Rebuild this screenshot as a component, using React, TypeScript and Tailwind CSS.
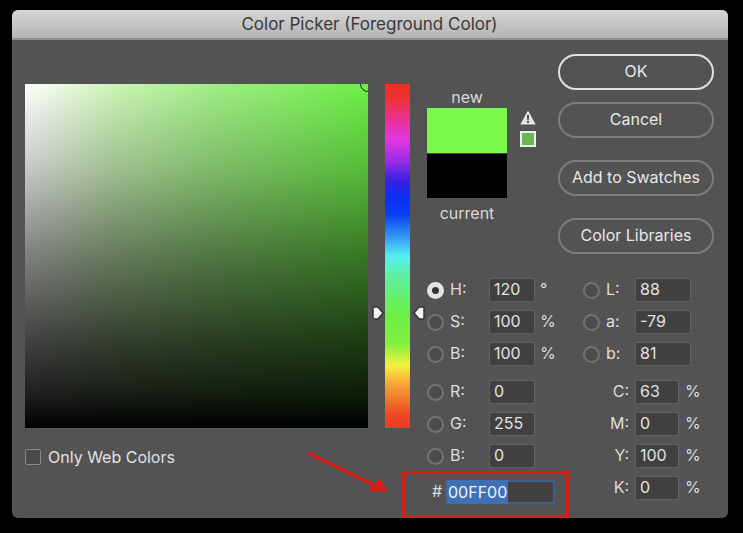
import React from "react";

const FONT = "[font-family:Inter,'Liberation_Sans',Arial,sans-serif]";

interface FieldRowProps {
  label: string;
  value: string;
  unit?: string;
  selected?: boolean;
}

const Radio = ({ selected }: { selected?: boolean }) =>
  selected ? (
    <span className="flex h-[17px] w-[17px] shrink-0 items-center justify-center rounded-full bg-[#e4e4e4]">
      <span className="h-[7px] w-[7px] rounded-full bg-[#333333]" />
    </span>
  ) : (
    <span className="h-[17px] w-[17px] shrink-0 rounded-full border-2 border-[#737373] bg-[#4c4c4c]" />
  );

const NumberBox = ({ value, width }: { value: string; width: string }) => (
  <span
    className={`flex h-[24px] items-center border border-[#606060] bg-[#404040] pb-[2px] pl-[4px] text-[16px] text-[#e2e2e2] ${width}`}
  >
    {value}
  </span>
);

// H S B and R G B rows
const HsbRow = ({ label, value, unit, selected }: FieldRowProps) => (
  <div className="flex h-[32px] items-center">
    <Radio selected={selected} />
    <span className="ml-[6px] w-[39px] pb-[2px] text-[16px] text-[#dddddd]">{label}</span>
    <NumberBox value={value} width="w-[46px]" />
    <span className="ml-[5px] pb-[2px] text-[16px] text-[#dddddd]">{unit}</span>
  </div>
);

const LabRow = ({ label, value }: FieldRowProps) => (
  <div className="flex h-[32px] items-center">
    <Radio />
    <span className="ml-[6px] w-[29px] pb-[2px] text-[16px] text-[#dddddd]">{label}</span>
    <NumberBox value={value} width="w-[56px]" />
  </div>
);

const CmykRow = ({ label, value }: FieldRowProps) => (
  <div className="flex h-[32px] items-center">
    <span className="w-[52px] pb-[2px] pr-[6px] text-right text-[16px] text-[#dddddd]">{label}</span>
    <NumberBox value={value} width="w-[44px]" />
    <span className="ml-[6px] pb-[2px] text-[16px] text-[#dddddd]">%</span>
  </div>
);

const DialogButton = ({
  label,
  primary,
  className,
}: {
  label: string;
  primary?: boolean;
  className: string;
}) => (
  <button
    className={`block h-[36px] w-[156px] rounded-full border-2 pb-[2px] text-[16px] text-[#e8e8e8] ${
      primary ? "border-[#e0e0e0]" : "border-[#7c7c7c]"
    } ${className}`}
  >
    {label}
  </button>
);

const HueMarker = ({ flip, className }: { flip?: boolean; className: string }) => (
  <svg
    viewBox="0 0 12 14"
    className={`absolute top-[266px] h-[14px] w-[12px] ${flip ? "-scale-x-100" : ""} ${className}`}
  >
    <path d="M2 1h4l5 6-5 6H2a1 1 0 0 1-1-1V2a1 1 0 0 1 1-1z" fill="#f4f4f4" stroke="#333333" strokeWidth="1.5" />
  </svg>
);

export default function App() {
  return (
    <div className={`h-[533px] w-[743px] overflow-hidden bg-black pl-[12px] pt-[10px] ${FONT}`}>
      <div className="relative h-[508px] w-[716px] overflow-hidden rounded-[6px] bg-[#535353]">
        {/* Title bar */}
        <div className="flex h-[30px] items-center justify-center border-b-2 border-[#8f8f8f] bg-gradient-to-b from-[#d6d6d6] to-[#b4b4b4] pr-[1px] pt-[2px] text-[17px] text-[#3a3a3a]">
          Color Picker (Foreground Color)
        </div>

        <div className="flex pl-[13px]">
          {/* Colour field */}
          <div className="w-[343px] shrink-0 pt-[44px]">
            <div className="relative h-[344px] overflow-hidden bg-[linear-gradient(to_right,#ffffff,#ccf5b8_25%,#a0ee84_55%,#6cf046)]">
              <div className="h-full bg-[linear-gradient(to_bottom,transparent,rgba(0,0,0,0.22)_25%,rgba(0,0,0,0.5)_50%,rgba(0,0,0,0.75)_75%,rgba(0,0,0,0.88)_90%,#000000)]" />
              <span className="absolute -right-[8px] -top-[8px] h-[16px] w-[16px] rounded-full border border-[#222222]" />
            </div>
            <div className="mt-[17px] flex items-center text-[16px] text-[#e2e2e2]">
              <span className="mr-[7px] h-[16px] w-[16px] rounded-[2px] border border-[#8a8a8a] bg-[#4a4a4a]" />
              Only Web Colors
            </div>
          </div>

          {/* Hue slider */}
          <div className="relative ml-[17px] w-[25px] shrink-0 pt-[44px]">
            <div className="h-[344px] bg-[linear-gradient(to_bottom,#ee3124_0%,#ee3130_4%,#e8308f_10%,#e535e0_16%,#a02de8_22%,#3a20e0_28%,#0a2ff5_33%,#0a3ff0_38%,#3a9ff8_45%,#55eff0_50%,#60f0a0_56%,#6cf046_67%,#80f040_75%,#f5f040_82%,#f6a838_87%,#ee4a24_96%,#ee3a24_100%)]" />
            <HueMarker className="-left-[13px]" />
            <HueMarker flip className="left-[28px]" />
          </div>

          {/* Everything right of the slider */}
          <div className="ml-[17px] flex-1">
            <div className="flex h-[234px]">
              <div className="w-[80px] shrink-0 pt-[48px] text-center text-[16px] text-[#d8d8d8]">
                <div className="h-[20px] leading-[18px]">new</div>
                <div className="h-[45px] bg-[#78fa4c]" />
                <div className="h-[45px] border-t border-[#444444] bg-black" />
                <div className="mt-[5px] h-[20px] leading-[20px]">current</div>
              </div>
              <div className="ml-[13px] w-[16px] shrink-0 pt-[70px]">
                <svg viewBox="0 0 16 15" className="h-[15px] w-[16px]">
                  <path d="M8 0.5 15.7 14.5H0.3Z" fill="#e6e6e6" />
                  <path d="M7.1 5h1.8l-.3 5.4H7.4ZM7.1 11.3h1.8v1.7H7.1Z" fill="#333333" />
                </svg>
                <div className="mt-[6px] h-[16px] w-[16px] border-2 border-[#eeeeee] bg-[#6cb84e]" />
              </div>
              <div className="ml-[22px] pt-[14px]">
                <DialogButton primary label="OK" className="" />
                <DialogButton label="Cancel" className="mt-[12px]" />
                <DialogButton label="Add to Swatches" className="mt-[22px]" />
                <DialogButton label="Color Libraries" className="mt-[22px]" />
              </div>
            </div>

            <div className="flex">
              {/* HSB, RGB, hex */}
              <div className="w-[156px] shrink-0">
                <HsbRow selected label="H:" value="120" unit="°" />
                <HsbRow label="S:" value="100" unit="%" />
                <HsbRow label="B:" value="100" unit="%" />
                <div className="h-[6px]" />
                <HsbRow label="R:" value="0" />
                <HsbRow label="G:" value="255" />
                <HsbRow label="B:" value="0" />
                <div className="mt-[4px] flex h-[32px] items-center">
                  <span className="ml-[5px] w-[13px] pb-[2px] text-[16px] text-[#dddddd]">#</span>
                  <span className="flex h-[24px] w-[110px] shrink-0 items-center border-2 border-[#3c5f8e] bg-[#404040] text-[16px] text-[#f0f4fa]">
                    <span className="bg-[#3d70b4] px-[1px]">00FF00</span>
                  </span>
                </div>
              </div>
              {/* Lab, CMYK */}
              <div>
                <LabRow label="L:" value="88" />
                <LabRow label="a:" value="-79" />
                <LabRow label="b:" value="81" />
                <div className="h-[6px]" />
                <CmykRow label="C:" value="63" />
                <CmykRow label="M:" value="0" />
                <CmykRow label="Y:" value="100" />
                <CmykRow label="K:" value="0" />
              </div>
            </div>
          </div>
        </div>

        {/* Red annotation */}
        <div className="absolute left-[390px] top-[461px] h-[47px] w-[167px] border-[3px] border-[#d3201a]" />
        <svg viewBox="0 0 90 50" className="absolute left-[292px] top-[440px] h-[50px] w-[90px]">
          <path d="M4 3 70 35" stroke="#d3201a" strokeWidth="3.5" fill="none" />
          <path d="M76 28 84 42 64 41Z" fill="#d3201a" />
        </svg>
      </div>
    </div>
  );
}
